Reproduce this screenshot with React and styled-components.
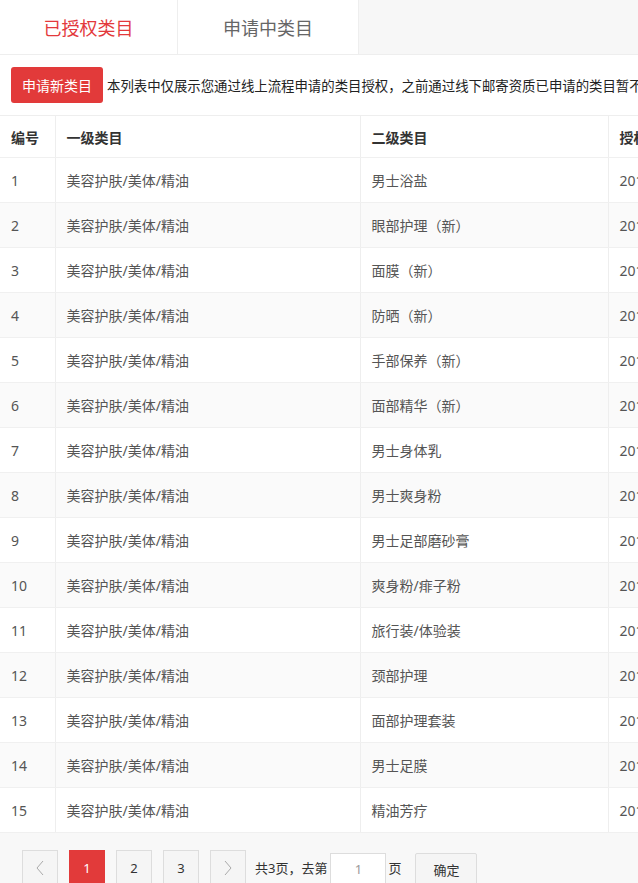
import React from "react";
import styled, { createGlobalStyle } from "styled-components";

const Global = createGlobalStyle`
  html, body { margin: 0; padding: 0; background: #fff; overflow: hidden; }
  body { font-family: "Noto Sans", "Noto Sans CJK SC", sans-serif; color: #333; }
  * { box-sizing: border-box; }
`;

const Page = styled.div`
  width: 638px;
  overflow: hidden;
`;

const TabBar = styled.div`
  display: flex;
  height: 55px;
  background: #f7f7f7;
  border-bottom: 1px solid #eeeeee;
`;

const Tab = styled.div`
  width: ${(p) => p.$w}px;
  height: 54px;
  background: #fff;
  border-right: 1px solid #eeeeee;
  display: flex;
  align-items: center;
  justify-content: center;
  font-size: 18px;
  color: ${(p) => (p.$active ? "#e3393c" : "#666")};
`;

const Toolbar = styled.div`
  display: flex;
  align-items: center;
  gap: 4px;
  padding: 12px 0 12px 11px;
  white-space: nowrap;
`;

const PrimaryButton = styled.button`
  flex: none;
  width: 92px;
  height: 36px;
  border: none;
  border-radius: 3px;
  background: #e23a3a;
  color: #fff;
  font-family: inherit;
  font-size: 14px;
  padding: 0;
`;

const Notice = styled.span`
  font-size: 13.4px;
  color: #222;
`;

const Table = styled.table`
  width: 1100px;
  table-layout: fixed;
  border-collapse: collapse;
  border-top: 1px solid #eeeeee;
`;

const Th = styled.th`
  height: 42px;
  padding: 0 0 0 11px;
  text-align: left;
  font-size: 14px;
  font-weight: 700;
  color: #333;
  border-right: 1px solid #eeeeee;
  border-bottom: 1px solid #f0f0f0;
  white-space: nowrap;
  overflow: hidden;
`;

const Tr = styled.tr`
  background: ${(p) => (p.$even ? "#fafafa" : "#fff")};
`;

const Td = styled.td`
  height: 45px;
  padding: 0 0 0 11px;
  font-size: 14px;
  color: #555;
  border-right: 1px solid #eeeeee;
  border-bottom: 1px solid #f0f0f0;
  white-space: nowrap;
  overflow: hidden;
`;

const Pager = styled.div`
  display: flex;
  align-items: flex-start;
  padding: 17px 0 20px 22px;
  background: #f8f8f8;
  white-space: nowrap;
`;

const PageBtn = styled.div`
  flex: none;
  width: 36px;
  height: 36px;
  margin-right: 11px;
  display: flex;
  align-items: center;
  justify-content: center;
  border: 1px solid ${(p) => (p.$active ? "#e23a3a" : "#dddddd")};
  background: ${(p) => (p.$active ? "#e23a3a" : "#f5f5f5")};
  color: ${(p) => (p.$active ? "#fff" : "#333")};
  font-size: 13px;
`;

const PagerText = styled.span`
  font-size: 13px;
  color: #333;
  line-height: 36px;
`;

const PageInput = styled.input`
  width: 56px;
  height: 32px;
  margin: 3px 2px 0 3px;
  border: 1px solid #dddddd;
  background: #fff;
  text-align: center;
  font-family: inherit;
  font-size: 13px;
  color: #999;
  outline: none;
`;

const ConfirmButton = styled.button`
  width: 62px;
  height: 32px;
  margin: 3px 0 0 14px;
  border: 1px solid #dddddd;
  border-radius: 2px;
  background: #f5f5f5;
  font-family: inherit;
  font-size: 13px;
  color: #333;
  padding: 0;
`;

const Chevron = ({ dir }) => (
  <svg width="10" height="16" viewBox="0 0 10 16">
    <polyline
      points={dir === "left" ? "8,1 2,8 8,15" : "2,1 8,8 2,15"}
      fill="none"
      stroke="#aaa"
      strokeWidth="1"
    />
  </svg>
);

const sub = [
  "男士浴盐",
  "眼部护理（新）",
  "面膜（新）",
  "防晒（新）",
  "手部保养（新）",
  "面部精华（新）",
  "男士身体乳",
  "男士爽身粉",
  "男士足部磨砂膏",
  "爽身粉/痱子粉",
  "旅行装/体验装",
  "颈部护理",
  "面部护理套装",
  "男士足膜",
  "精油芳疗",
];

export default function App() {
  return (
    <Page>
      <Global />
      <TabBar>
        <Tab $w={178} $active>已授权类目</Tab>
        <Tab $w={181}>申请中类目</Tab>
      </TabBar>
      <Toolbar>
        <PrimaryButton>申请新类目</PrimaryButton>
        <Notice>
          本列表中仅展示您通过线上流程申请的类目授权，之前通过线下邮寄资质已申请的类目暂不在此列表中展示
        </Notice>
      </Toolbar>
      <Table>
        <colgroup>
          <col style={{ width: 55 }} />
          <col style={{ width: 305 }} />
          <col style={{ width: 248 }} />
          <col style={{ width: 492 }} />
        </colgroup>
        <thead>
          <tr>
            <Th>编号</Th>
            <Th>一级类目</Th>
            <Th>二级类目</Th>
            <Th>授权时间</Th>
          </tr>
        </thead>
        <tbody>
          {sub.map((s, i) => (
            <Tr key={i} $even={i % 2 === 1}>
              <Td>{i + 1}</Td>
              <Td>美容护肤/美体/精油</Td>
              <Td>{s}</Td>
              <Td>2018-06-{String(10 + i).padStart(2, "0")} 10:2{i % 10}:36</Td>
            </Tr>
          ))}
        </tbody>
      </Table>
      <Pager>
        <PageBtn>
          <Chevron dir="left" />
        </PageBtn>
        <PageBtn $active>1</PageBtn>
        <PageBtn>2</PageBtn>
        <PageBtn>3</PageBtn>
        <PageBtn>
          <Chevron dir="right" />
        </PageBtn>
        <PagerText style={{ marginLeft: -2 }}>共3页，去第</PagerText>
        <PageInput defaultValue="1" />
        <PagerText>页</PagerText>
        <ConfirmButton>确定</ConfirmButton>
      </Pager>
    </Page>
  );
}
